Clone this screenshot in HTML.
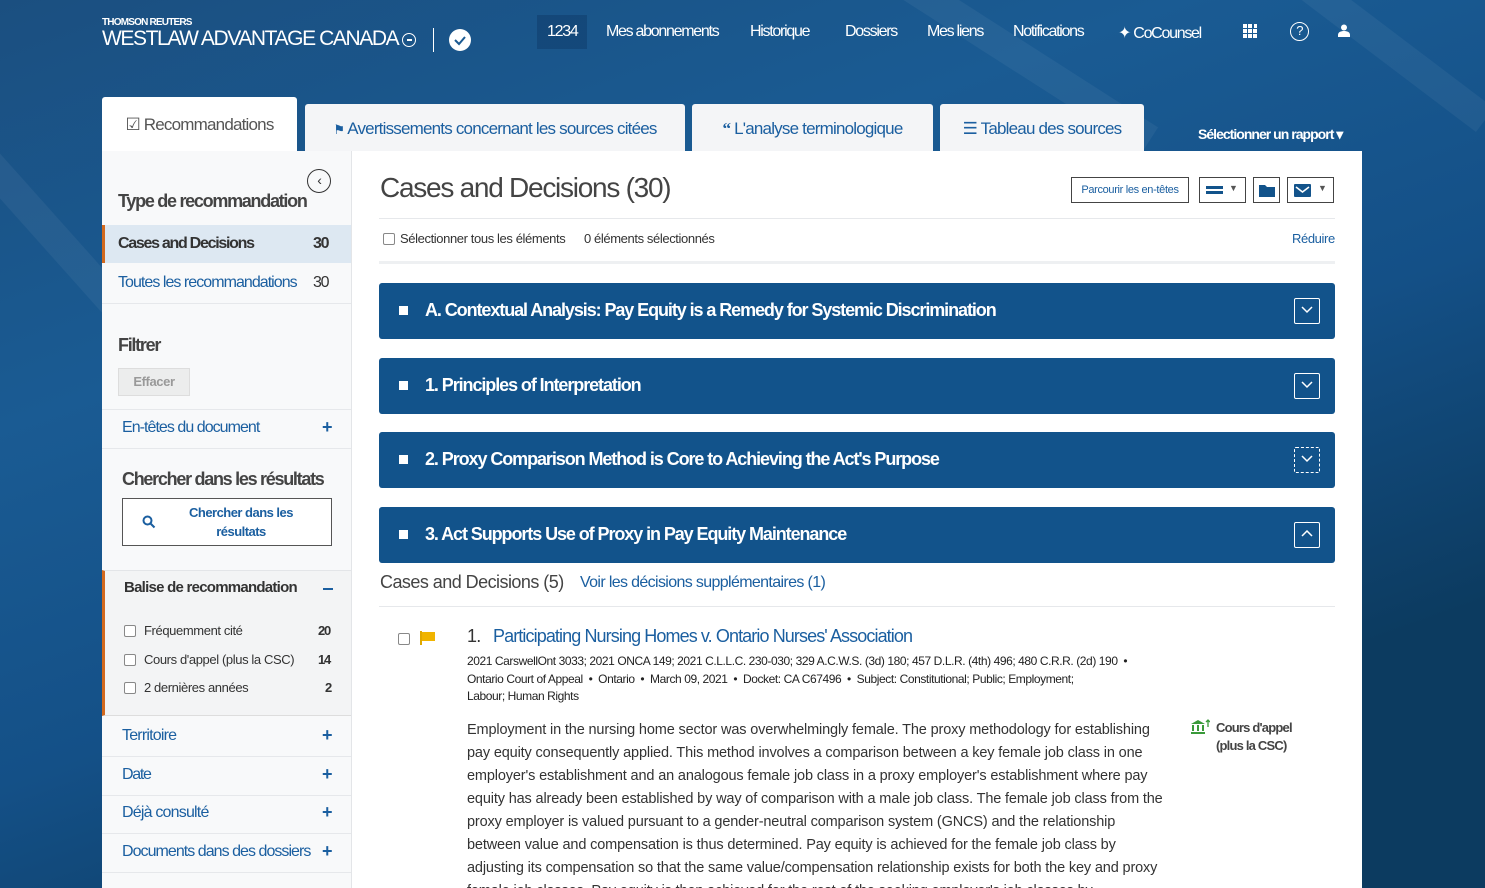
<!DOCTYPE html>
<html><head><meta charset="utf-8">
<style>
*{box-sizing:border-box;margin:0;padding:0}
html{overflow:hidden;width:1485px;height:888px}
body{width:1485px;height:888px;overflow:hidden;position:relative;font-family:"Liberation Sans",sans-serif;background:#0b3a5e;color:#333;letter-spacing:-0.05em}
.bg{position:absolute;left:0;top:0;width:1485px;height:888px;background:linear-gradient(160deg,#1b4f80 0%,#1a5b93 30%,#145087 55%,#0c3b60 80%)}
.a{position:absolute;white-space:nowrap}
.nav{color:#fff;font-size:16px;top:23px;letter-spacing:-0.08em}
.tab{position:absolute;top:104px;height:47px;background:#f4f5f7;border-radius:3px 3px 0 0;color:#1b5fa0;font-size:17px;padding-top:15px;text-align:center}
.side{position:absolute;left:102px;top:151px;width:250px;height:737px;background:#f8f9fa;border-right:1px solid #e3e5e8;letter-spacing:-0.08em}
.main{position:absolute;left:352px;top:151px;width:1010px;height:737px;background:#fff}
.bar{position:absolute;left:379px;width:956px;height:56px;background:#12538b;border-radius:3px;color:#fff;font-size:18px;font-weight:bold}
.bar .sq{position:absolute;left:20px;top:23px;width:9px;height:9px;background:#fff}
.bar .t{position:absolute;left:46px;top:17px;letter-spacing:-0.06em}
.bar .bx{position:absolute;right:15px;top:15px;width:26px;height:26px;border:1px solid #fff;border-radius:2px}
.bar .bx svg{position:absolute;left:6px;top:7px}
.hr{position:absolute;height:1px;background:#e6e8eb}
.link{color:#1b5fa0}
.plus{position:absolute;left:322px;color:#1b5fa0;font-size:18px;font-weight:bold}
.cb{position:absolute;width:12px;height:12px;border:1px solid #888;border-radius:2px;background:#fff}
.sm{letter-spacing:-0.03em}
</style></head><body>
<div class="bg"></div>
<svg class="a" style="left:0;top:0" width="1485" height="888"><g stroke="rgba(255,255,255,0.05)" stroke-width="30"><line x1="-50" y1="120" x2="200" y2="400"/><line x1="900" y1="-20" x2="1150" y2="140"/><line x1="1300" y1="-20" x2="1485" y2="120"/></g></svg>

<div class="a" style="left:102px;top:17px;color:#fff;font-size:10px;font-weight:bold">THOMSON REUTERS</div>
<div class="a" style="left:102px;top:27px;color:#fff;font-size:21px;letter-spacing:-1.4px">WESTLAW ADVANTAGE CANADA</div>
<div class="a" style="left:402px;top:33px;width:14px;height:14px;border:1.5px solid #fff;border-radius:50%"></div>
<div class="a" style="left:407px;top:39px;width:5px;height:2px;background:#fff"></div>
<div class="a" style="left:433px;top:28px;width:1px;height:24px;background:#fff"></div>
<div class="a" style="left:449px;top:29px;width:22px;height:22px;border-radius:50%;background:#fff"><svg width="22" height="22"><path d="M6 11l4 4 6-7" stroke="#1b5a92" stroke-width="2" fill="none"/></svg></div>
<div class="a" style="left:537px;top:15px;width:50px;height:34px;background:rgba(0,30,70,0.25)"></div>
<div class="a nav" style="left:547px">1234</div>
<div class="a nav" style="left:606px">Mes abonnements</div>
<div class="a nav" style="left:750px">Historique</div>
<div class="a nav" style="left:845px">Dossiers</div>
<div class="a nav" style="left:927px">Mes liens</div>
<div class="a nav" style="left:1013px">Notifications</div>
<div class="a nav" style="left:1118px">✦ CoCounsel</div>
<svg class="a" style="left:1243px;top:24px" width="18" height="14"><g fill="#fff"><rect x="0" y="0" width="4" height="4"/><rect x="5" y="0" width="4" height="4"/><rect x="0" y="5" width="4" height="4"/><rect x="5" y="5" width="4" height="4"/><rect x="10" y="5" width="4" height="4"/><rect x="0" y="10" width="4" height="4"/><rect x="5" y="10" width="4" height="4"/><rect x="10" y="10" width="4" height="4"/><rect x="11" y="0" width="3" height="4"/></g></svg>
<div class="a" style="left:1290px;top:22px;width:19px;height:19px;border:1.5px solid #fff;border-radius:50%;color:#fff;font-size:13px;text-align:center;line-height:16px">?</div>
<svg class="a" style="left:1338px;top:24px" width="12" height="13"><circle cx="6" cy="3.5" r="3" fill="#fff"/><path d="M0 13v-2c0-3 3-4 6-4s6 1 6 4v2z" fill="#fff"/></svg>

<div class="tab" style="left:102px;top:97px;width:195px;height:56px;background:#fff;color:#555;padding-top:18px">☑ Recommandations</div>
<div class="tab" style="left:305px;width:380px"><span style="font-size:13px">⚑</span> Avertissements concernant les sources citées</div>
<div class="tab" style="left:692px;width:241px"><b style="font-family:'Liberation Serif',serif">“</b> L'analyse terminologique</div>
<div class="tab" style="left:940px;width:204px">☰ Tableau des sources</div>
<div class="a" style="left:1198px;top:126px;color:#fff;font-size:14px;font-weight:bold;letter-spacing:-0.07em">Sélectionner un rapport ▾</div>

<div class="side">
 <div class="a" style="left:205px;top:18px;width:24px;height:24px;border:1.5px solid #333;border-radius:50%;text-align:center;font-size:14px;line-height:20px;color:#333">‹</div>
 <div class="a" style="left:16px;top:40px;font-size:18px;font-weight:bold;color:#444">Type de recommandation</div>
 <div class="a" style="left:0;top:74px;width:249px;height:38px;background:#dde8f2;border-left:3px solid #d2691e"></div>
 <div class="a" style="left:16px;top:84px;font-size:16px;font-weight:bold;color:#333">Cases and Decisions</div>
 <div class="a" style="left:211px;top:84px;font-size:16px;font-weight:bold;color:#333">30</div>
 <div class="a link" style="left:16px;top:123px;font-size:16px;letter-spacing:-0.06em">Toutes les recommandations</div>
 <div class="a" style="left:211px;top:123px;font-size:16px;color:#333">30</div>
 <div class="hr" style="left:0;top:152px;width:249px"></div>
 <div class="a" style="left:16px;top:184px;font-size:18px;font-weight:bold;color:#444">Filtrer</div>
 <div class="a sm" style="left:16px;top:217px;width:72px;height:28px;background:#eceded;border:1px solid #ddd;color:#999;font-size:13px;font-weight:bold;text-align:center;line-height:26px">Effacer</div>
 <div class="hr" style="left:0;top:258px;width:249px"></div>
 <div class="a link" style="left:20px;top:268px;font-size:16px;letter-spacing:-0.06em">En-têtes du document</div>
 <div class="plus" style="left:220px;top:266px">+</div>
 <div class="hr" style="left:0;top:297px;width:249px"></div>
 <div class="a" style="left:20px;top:318px;font-size:18px;font-weight:bold;color:#444">Chercher dans les résultats</div>
 <div class="a" style="left:20px;top:347px;width:210px;height:48px;border:1px solid #555;background:#fff"></div>
 <svg class="a" style="left:40px;top:364px" width="14" height="14"><circle cx="5.5" cy="5.5" r="4" stroke="#1b5fa0" stroke-width="2" fill="none"/><path d="M8.5 8.5l4 4" stroke="#1b5fa0" stroke-width="2"/></svg>
 <div class="a link" style="left:84px;top:352px;width:110px;text-align:center;font-size:13px;font-weight:bold;line-height:19px;white-space:normal;letter-spacing:-0.04em">Chercher dans les résultats</div>
 <div class="a" style="left:0;top:419px;width:249px;height:146px;background:#f3f4f5;border-left:3px solid #d2691e;border-top:1px solid #e3e5e8;border-bottom:1px solid #ddd"></div>
 <div class="a" style="left:22px;top:428px;font-size:15px;font-weight:bold;color:#333;letter-spacing:-0.05em">Balise de recommandation</div>
 <div class="a" style="left:221px;top:437px;width:10px;height:2px;background:#1b5fa0"></div>
 <div class="cb" style="left:22px;top:474px"></div><div class="a sm" style="left:42px;top:472px;font-size:13px;color:#333">Fréquemment cité</div><div class="a" style="left:216px;top:472px;font-size:13px;font-weight:bold">20</div>
 <div class="cb" style="left:22px;top:503px"></div><div class="a sm" style="left:42px;top:501px;font-size:13px;color:#333">Cours d'appel (plus la CSC)</div><div class="a" style="left:216px;top:501px;font-size:13px;font-weight:bold">14</div>
 <div class="cb" style="left:22px;top:531px"></div><div class="a sm" style="left:42px;top:529px;font-size:13px;color:#333">2 dernières années</div><div class="a" style="left:223px;top:529px;font-size:13px;font-weight:bold">2</div>
 <div class="a link" style="left:20px;top:576px;font-size:16px;letter-spacing:-0.05em">Territoire</div><div class="plus" style="left:220px;top:574px">+</div>
 <div class="hr" style="left:0;top:605px;width:249px"></div>
 <div class="a link" style="left:20px;top:615px;font-size:16px">Date</div><div class="plus" style="left:220px;top:613px">+</div>
 <div class="hr" style="left:0;top:644px;width:249px"></div>
 <div class="a link" style="left:20px;top:653px;font-size:16px;letter-spacing:-0.05em">Déjà consulté</div><div class="plus" style="left:220px;top:651px">+</div>
 <div class="hr" style="left:0;top:682px;width:249px"></div>
 <div class="a link" style="left:20px;top:692px;font-size:16px;letter-spacing:-0.06em">Documents dans des dossiers</div><div class="plus" style="left:220px;top:690px">+</div>
 <div class="hr" style="left:0;top:721px;width:249px"></div>
</div>

<div class="main"></div>
<div class="a" style="left:380px;top:172px;font-size:28px;color:#444;letter-spacing:-0.045em">Cases and Decisions (30)</div>
<div class="a sm" style="left:1071px;top:177px;width:118px;height:26px;border:1px solid #444;color:#1b5fa0;font-size:11px;text-align:center;line-height:24px">Parcourir les en-têtes</div>
<div class="a" style="left:1199px;top:177px;width:47px;height:26px;border:1px solid #444"><div class="a" style="left:6px;top:8px;width:17px;height:3px;background:#12538b"></div><div class="a" style="left:6px;top:13px;width:17px;height:3px;background:#12538b"></div><div class="a" style="left:29px;top:5px;font-size:9px;color:#555">▼</div></div>
<div class="a" style="left:1253px;top:177px;width:27px;height:26px;border:1px solid #444"><svg class="a" style="left:5px;top:6px" width="16" height="13"><path d="M0 1h6l2 2h8v10H0z" fill="#12538b"/></svg></div>
<div class="a" style="left:1287px;top:177px;width:47px;height:26px;border:1px solid #444"><svg class="a" style="left:6px;top:6px" width="17" height="13"><rect width="17" height="13" rx="1" fill="#12538b"/><path d="M2 3l6.5 5L15 3" stroke="#fff" stroke-width="1.6" fill="none"/></svg><div class="a" style="left:30px;top:5px;font-size:9px;color:#555">▼</div></div>
<div class="hr" style="left:379px;top:218px;width:956px"></div>
<div class="cb" style="left:383px;top:233px"></div>
<div class="a sm" style="left:400px;top:231px;font-size:13px;color:#333">Sélectionner tous les éléments</div>
<div class="a sm" style="left:584px;top:231px;font-size:13px;color:#333">0 éléments sélectionnés</div>
<div class="a link sm" style="left:1292px;top:231px;font-size:13px">Réduire</div>
<div class="a" style="left:379px;top:261px;width:956px;height:3px;background:#eef0f2"></div>

<div class="bar" style="top:283px"><div class="sq"></div><div class="t">A. Contextual Analysis: Pay Equity is a Remedy for Systemic Discrimination</div><div class="bx"><svg width="12" height="8"><path d="M1 1l5 5 5-5" stroke="#fff" stroke-width="1.5" fill="none"/></svg></div></div>
<div class="bar" style="top:358px"><div class="sq"></div><div class="t">1. Principles of Interpretation</div><div class="bx"><svg width="12" height="8"><path d="M1 1l5 5 5-5" stroke="#fff" stroke-width="1.5" fill="none"/></svg></div></div>
<div class="bar" style="top:432px"><div class="sq"></div><div class="t">2. Proxy Comparison Method is Core to Achieving the Act's Purpose</div><div class="bx" style="border-style:dashed"><svg width="12" height="8"><path d="M1 1l5 5 5-5" stroke="#fff" stroke-width="1.5" fill="none"/></svg></div></div>
<div class="bar" style="top:507px"><div class="sq"></div><div class="t">3. Act Supports Use of Proxy in Pay Equity Maintenance</div><div class="bx"><svg width="12" height="8"><path d="M1 6l5-5 5 5" stroke="#fff" stroke-width="1.5" fill="none"/></svg></div></div>

<div class="a" style="left:380px;top:572px;font-size:18px;color:#444;letter-spacing:-0.03em">Cases and Decisions (5)</div>
<div class="a link" style="left:580px;top:574px;font-size:16px;letter-spacing:-0.04em">Voir les décisions supplémentaires (1)</div>
<div class="hr" style="left:379px;top:606px;width:956px"></div>
<div class="cb" style="left:398px;top:633px"></div>
<svg class="a" style="left:420px;top:631px" width="17" height="14"><path d="M1 0v14" stroke="#e0a800" stroke-width="2"/><path d="M2 1h13v9H2z" fill="#f0b400"/></svg>
<div class="a" style="left:467px;top:626px;font-size:18px;color:#333">1.</div>
<div class="a link" style="left:493px;top:626px;font-size:18px;letter-spacing:-0.05em">Participating Nursing Homes v. Ontario Nurses' Association</div>
<div class="a" style="left:467px;top:653px;font-size:12px;color:#222;line-height:17.5px;letter-spacing:-0.035em">2021 CarswellOnt 3033; 2021 ONCA 149; 2021 C.L.L.C. 230-030; 329 A.C.W.S. (3d) 180; 457 D.L.R. (4th) 496; 480 C.R.R. (2d) 190 &nbsp;•<br>Ontario Court of Appeal &nbsp;• &nbsp;Ontario &nbsp;• &nbsp;March 09, 2021 &nbsp;• &nbsp;Docket: CA C67496 &nbsp;• &nbsp;Subject: Constitutional; Public; Employment;<br>Labour; Human Rights</div>
<div class="a" style="left:467px;top:719px;width:700px;height:169px;overflow:hidden;white-space:normal;font-size:14.5px;color:#333;line-height:23px;letter-spacing:-0.01em">Employment in the nursing home sector was overwhelmingly female. The proxy methodology for establishing pay equity consequently applied. This method involves a comparison between a key female job class in one employer's establishment and an analogous female job class in a proxy employer's establishment where pay equity has already been established by way of comparison with a male job class. The female job class from the proxy employer is valued pursuant to a gender-neutral comparison system (GNCS) and the relationship between value and compensation is thus determined. Pay equity is achieved for the female job class by adjusting its compensation so that the same value/compensation relationship exists for both the key and proxy female job classes. Pay equity is then achieved for the rest of the seeking employer's job classes by comparison</div>
<svg class="a" style="left:1190px;top:719px" width="20" height="16"><path d="M1 5l7-4 7 4z" fill="#3a9a3a"/><rect x="2" y="6" width="2" height="6" fill="#3a9a3a"/><rect x="7" y="6" width="2" height="6" fill="#3a9a3a"/><rect x="12" y="6" width="2" height="6" fill="#3a9a3a"/><rect x="1" y="13" width="14" height="2" fill="#3a9a3a"/><path d="M18 8V1M16 3l2-2 2 2" stroke="#3a9a3a" stroke-width="1.3" fill="none"/></svg>
<div class="a" style="left:1216px;top:719px;font-size:13px;font-weight:bold;color:#444;line-height:18px">Cours d'appel<br>(plus la CSC)</div>
</body></html>
